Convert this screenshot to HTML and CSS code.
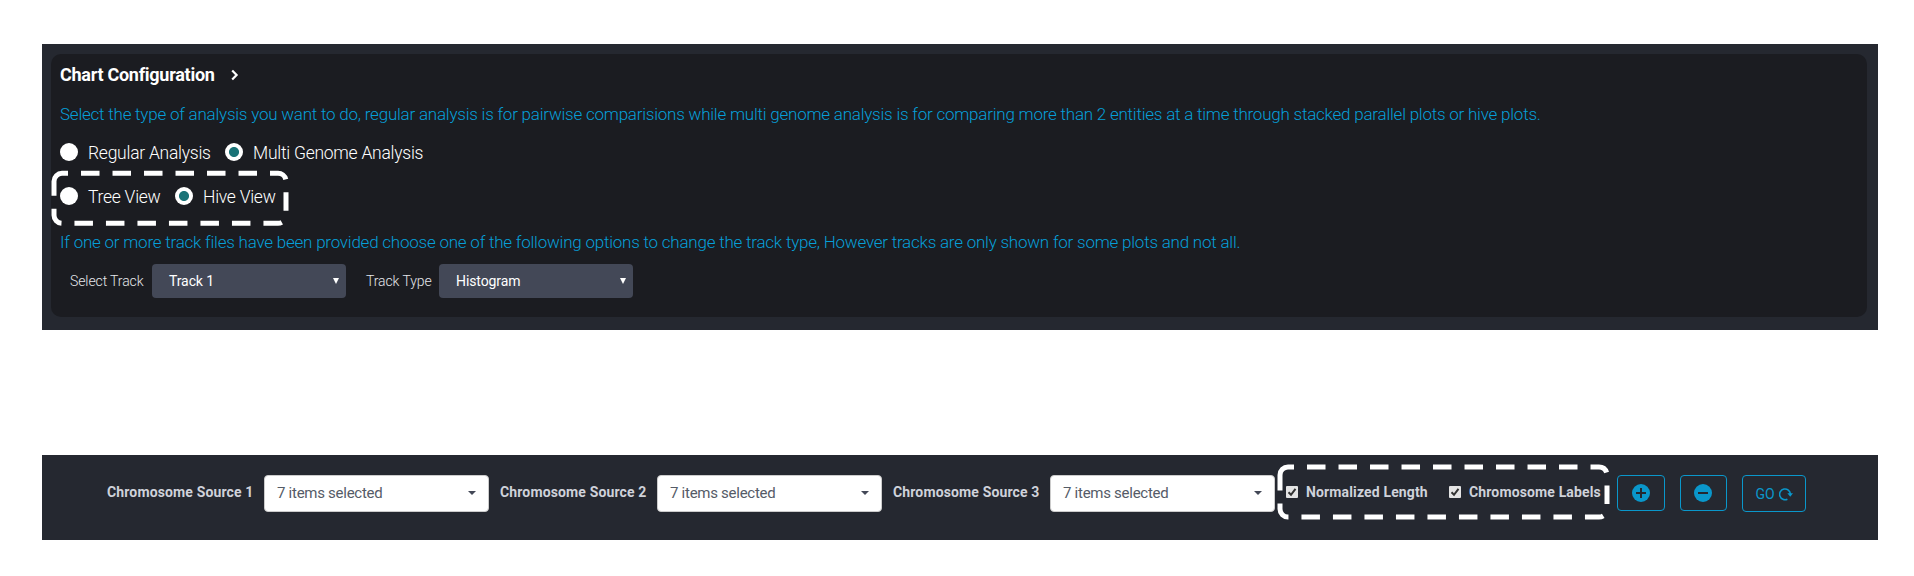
FILE: index.html
```
<!DOCTYPE html>
<html lang="en">
<head>
<meta charset="utf-8">
<title>Chart Configuration</title>
<link rel="stylesheet" href="styles.css">
</head>
<body>
<section class="panel config">
  <div class="card">
    <h2 class="heading"><span class="t-head">Chart Configuration</span>
      <svg class="chevron" width="8" height="12" viewBox="0 0 8 12"><path d="M1.2 1.5 5.6 6 1.2 10.5"/></svg>
    </h2>
    <p class="hint hint-a"><span>Select the type of analysis you want to do, regular analysis is for pairwise comparisions while multi genome analysis is for comparing more than 2 entities at a time through stacked parallel plots or hive plots.</span></p>
    <div class="radios">
      <label class="radio r-regular"><i class="dot"></i><span>Regular Analysis</span></label>
      <label class="radio"><i class="dot on"></i><span>Multi Genome Analysis</span></label>
    </div>
    <div class="radios second">
      <label class="radio r-tree"><i class="dot"></i><span>Tree View</span></label>
      <label class="radio"><i class="dot on"></i><span>Hive View</span></label>
      <svg class="mark mark-views" width="240" height="58"><path d="M4 12.3a8 8 0 0 1 8-8H228a8 8 0 0 1 8 8V46.3a8 8 0 0 1-8 8H12a8 8 0 0 1-8-8Z"/></svg>
    </div>
    <p class="hint hint-b"><span>If one or more track files have been provided choose one of the following options to change the track type, However tracks are only shown for some plots and not all.</span></p>
    <div class="tracks">
      <span class="tlabel l-select">Select Track</span>
      <div class="tselect"><span>Track 1</span><i></i></div>
      <span class="tlabel l-type">Track Type</span>
      <div class="tselect"><span>Histogram</span><i></i></div>
    </div>
  </div>
</section>
<section class="panel sources">
  <div class="source"><b class="label">Chromosome Source 1</b><div class="picker"><span>7 items selected</span><i></i></div></div>
  <div class="source"><b class="label">Chromosome Source 2</b><div class="picker"><span>7 items selected</span><i></i></div></div>
  <div class="source"><b class="label">Chromosome Source 3</b><div class="picker"><span>7 items selected</span><i></i></div></div>
  <div class="checks">
    <label class="check c-norm"><svg class="box" width="12" height="12"><path d="M2.5 6.2 5 8.8 9.5 2.8"/></svg><b class="label">Normalized Length</b></label>
    <label class="check"><svg class="box" width="12" height="12"><path d="M2.5 6.2 5 8.8 9.5 2.8"/></svg><b class="label">Chromosome Labels</b></label>
    <svg class="mark mark-checks" width="336" height="58"><path d="M4 12a8 8 0 0 1 8-8H323a8 8 0 0 1 8 8V46a8 8 0 0 1-8 8H12a8 8 0 0 1-8-8Z"/></svg>
  </div>
  <div class="buttons">
    <button class="btn"><svg width="18" height="18"><circle cx="9" cy="9" r="9"/><path d="M4 9h10M9 4v10"/></svg></button>
    <button class="btn"><svg width="18" height="18"><circle cx="9" cy="9" r="9"/><path d="M4 9h10"/></svg></button>
    <button class="btn go"><span>GO</span><svg class="reload" width="14" height="14" viewBox="0 0 14 14"><path class="arc" d="M8.4 12.2A5.4 5.4 0 1 1 11.4 7"/><path class="tip" d="M8.4 6.2h5.6l-2.8 3.5z"/></svg></button>
  </div>
</section>
</body>
</html>
```
FILE: styles.css
```
* { box-sizing: border-box; }
body {
  margin: 0;
  padding: 44px 36px 0 42px;
  height: 576px;
  overflow: hidden;
  background: #fff;
  font-family: Roboto, "Liberation Sans", sans-serif;
}
span, b { white-space: nowrap; }
.panel { background: #252830; }
.config { height: 286px; padding: 10px 11px 13px 9px; }
.card { height: 263px; padding: 10px 9px; border-radius: 10px; background: #1b1c21; }
.heading { display: flex; align-items: center; gap: 16px; margin: 0; height: 22px; font-size: 18px; line-height: 22px; font-weight: 700; letter-spacing: -0.27px; color: #fff; }
.chevron path { fill: none; stroke: #fff; stroke-width: 2.2; }
.hint { margin: 0; height: 24px; line-height: 24px; font-size: 17px; font-weight: 300; letter-spacing: -0.226px; color: #069fd8; }
.hint-a { margin-top: 16px; }
.hint-b { margin-top: 22px; }
.radios { position: relative; display: flex; height: 24px; margin-top: 14px; }
.second { margin-top: 20px; }
.radio { display: flex; align-items: center; gap: 10px; font-size: 17.5px; line-height: 24px; font-weight: 300; letter-spacing: -0.26px; color: #fff; }
.radio span { padding-top: 2px; }
.r-regular { width: 165px; }
.r-tree { width: 115px; }
.dot { width: 18px; height: 18px; border-radius: 50%; background: #fff; }
.dot.on { background: radial-gradient(circle, #1a7377 4.6px, #fff 5.4px); }
.mark { position: absolute; fill: none; stroke: #fff; stroke-width: 5; stroke-dasharray: 18.5 13; }
.mark-views { left: -10.5px; top: -15px; }
.tracks { display: flex; align-items: center; height: 34px; margin-top: 10px; padding-left: 10px; font-size: 14px; }
.tlabel { font-weight: 300; letter-spacing: -0.1px; color: #e5e7eb; }
.l-select { width: 82px; }
.l-type { width: 73px; margin-left: 20px; }
.tselect { display: flex; align-items: center; justify-content: space-between; width: 194px; height: 34px; padding: 0 7px 0 17px; border-radius: 4px; background: #434857; color: #fff; letter-spacing: -0.1px; }
.tselect i { border: solid transparent; border-width: 6px 3.2px 0; border-top-color: #fff; }
.sources { display: flex; height: 85px; margin-top: 125px; padding: 20px 0 0 65px; }
.label { font-size: 14px; font-weight: 700; line-height: 34px; letter-spacing: 0.14px; color: #cfd2da; }
.source { display: flex; width: 393px; }
.source .label { width: 156.5px; }
.picker { display: flex; align-items: center; justify-content: space-between; width: 225px; height: 37px; padding: 0 12px 1px 12.5px; border: 1px solid #ccc; border-radius: 4px; background: #fff; color: #555b67; font-size: 15px; font-weight: 400; letter-spacing: -0.27px; }
.picker i { border: solid transparent; border-width: 4px 4px 0; border-top-color: #434857; }
.checks { position: relative; display: flex; height: 34px; width: 331px; }
.check { display: flex; align-items: center; gap: 8px; }
.c-norm { width: 163px; }
.box { background: #e4e4e4; border-radius: 1px; }
.box path { fill: none; stroke: #333; stroke-width: 2; }
.mark-checks { left: -10.5px; top: -12.5px; }
.buttons { display: flex; gap: 15px; }
.btn { display: flex; align-items: center; justify-content: center; width: 47.5px; height: 36px; padding: 0; border: 1px solid #0a97cb; border-radius: 4px; background: none; color: #0a97cb; font: 400 14px Roboto, sans-serif; }
.btn circle { fill: #0a97cb; }
.btn path { fill: none; stroke: #252830; stroke-width: 2; }
.go { width: 64px; height: 37px; gap: 4px; }
.go .arc { stroke: #0a97cb; stroke-width: 1.6; }
.go .tip { fill: #0a97cb; stroke: none; }
```
